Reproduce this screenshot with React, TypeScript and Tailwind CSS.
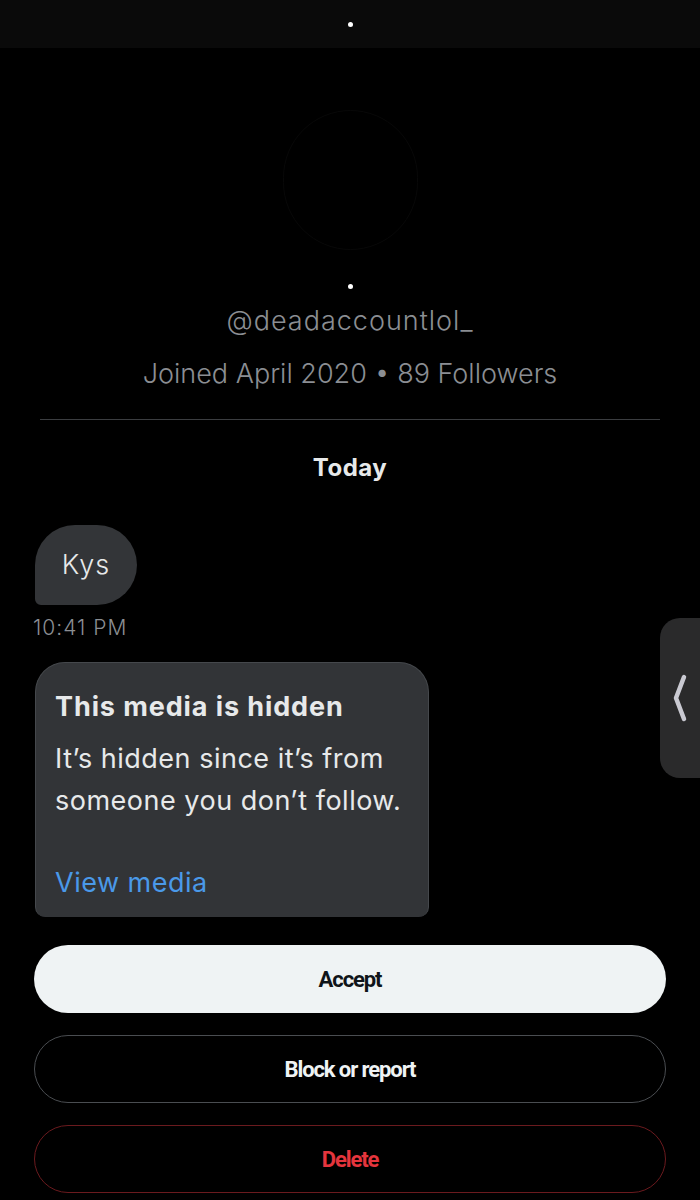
const font = { fontFamily: "Inter, Roboto, 'Noto Sans', sans-serif" }
const btnFont = { fontFamily: "Roboto, 'Noto Sans', sans-serif" }

export default function App() {
  return (
    <div className="relative h-[1200px] w-[700px] overflow-hidden bg-black" style={font}>
      {/* status strip */}
      <div className="flex h-[48px] items-center justify-center bg-[#0a0a0a]">
        <div className="h-[5px] w-[5px] rounded-full bg-white" />
      </div>

      {/* profile header */}
      <div className="flex flex-col items-center">
        <div className="mt-[62px] h-[140px] w-[135px] rounded-full border border-[#080808]" />
        <div className="mt-[34px] h-[5px] w-[5px] rounded-full bg-white" />
        <div className="mt-[16px] text-[27px] font-light leading-[32px] tracking-[1px] text-[#8b8e93]">
          @deadaccountlol_
        </div>
        <div className="mt-[21px] text-[27px] font-light leading-[32px] text-[#8b8e93]">
          Joined April 2020 • 89 Followers
        </div>
      </div>

      <div className="mx-[40px] mt-[29px] h-px bg-[#3b3d40]" />

      <div className="mt-[34px] text-center text-[24px] font-bold leading-[28px] tracking-[0.5px] text-[#e7e9ea]">
        Today
      </div>

      {/* messages */}
      <div className="px-[35px]">
        <div className="mt-[43px] flex h-[80px] w-[102px] items-center justify-center rounded-[40px] rounded-bl-[6px] bg-[#333538] text-[27px] font-light tracking-[1px] text-[#e7e9ea]">
          Kys
        </div>
        <div className="mt-[11px] -ml-[2px] text-[21px] font-light leading-[24px] tracking-[1px] text-[#8b8e93]">
          10:41 PM
        </div>

        <div className="mt-[22px] h-[255px] w-[394px] overflow-hidden rounded-t-[30px] rounded-b-[10px] border border-b-0 border-[#45484c] bg-[#323437] px-[19px] pt-[28px]">
          <div className="text-[27px] font-bold leading-[32px] tracking-[0.9px] text-[#e7e9ea]">This media is hidden</div>
          <div className="mt-[15px] text-[27px] font-normal leading-[42px] tracking-[0.5px] text-[#e7e9ea]">
            It’s hidden since it’s from
            <br />
            someone you don’t follow.
          </div>
          <div className="mt-[45px] text-[27px] font-normal leading-[32px] tracking-[0.5px] text-[#4a99e9]">View media</div>
        </div>
      </div>

      {/* actions */}
      <div className="mt-[28px] flex flex-col gap-[22px] px-[34px]" style={btnFont}>
        <button className="h-[68px] rounded-full bg-[#eff3f4] text-[22px] font-bold tracking-[-1.1px] text-[#0f1419]">
          Accept
        </button>
        <button className="h-[68px] rounded-full border border-[#4a4d51] text-[22px] font-bold tracking-[-1.1px] text-[#eff3f4]">
          Block or report
        </button>
        <button className="h-[68px] rounded-full border border-[#6b1a1e] text-[22px] font-bold tracking-[-1.1px] text-[#e5353d]">
          Delete
        </button>
      </div>

      {/* edge panel handle */}
      <div className="absolute right-0 top-[618px] flex h-[160px] w-[40px] items-center justify-center rounded-l-[20px] bg-[#2a2a2b]">
        <svg width="16" height="50" viewBox="0 0 16 50" fill="none">
          <path d="M12 4 L4 25 L12 46" stroke="#c9c9d1" strokeWidth="4.5" strokeLinecap="round" strokeLinejoin="round" />
        </svg>
      </div>
    </div>
  )
}
